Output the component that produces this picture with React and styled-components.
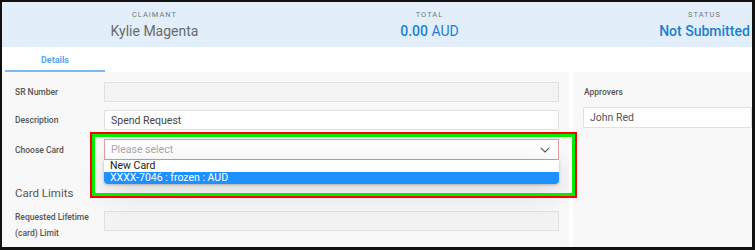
import React from "react";
import styled, { createGlobalStyle } from "styled-components";

const GlobalStyle = createGlobalStyle`
    body {
        margin: 0;
        background: #ffffff;
        font-family: Roboto, "Liberation Sans", sans-serif;
    }
`;

const Frame = styled.div`
    position: relative;
    width: 755px;
    height: 250px;
    box-sizing: border-box;
    border-style: solid;
    border-color: #111;
    border-width: 2px 3px 3px 2px;
    overflow: hidden;
    background: #ffffff;
`;

const Header = styled.div`
    display: grid;
    grid-template-columns: repeat(3, 275px);
    height: 45px;
    padding-left: 15px;
    background-color: #e2effb;
`;

const Stat = styled.div`
    display: flex;
    flex-direction: column;
    align-items: center;
    padding-top: 8px;
`;

const StatLabel = styled.div`
    font-size: 7.5px;
    letter-spacing: 1px;
    line-height: 9px;
    color: #777;
    text-transform: uppercase;
`;

const StatValue = styled.div`
    margin-top: 4px;
    font-size: 14px;
    line-height: 17px;
    font-weight: ${(props) => (props.$bold ? 500 : 400)};
    color: ${(props) => (props.$blue ? "#1b7fd6" : "#6a6a6a")};
    white-space: nowrap;
    & b {
        font-weight: 500;
    }
`;

const Tabs = styled.div`
    display: flex;
    height: 25px;
    background: #ffffff;
    padding-left: 3px;
`;

const Tab = styled.div`
    width: 100px;
    display: flex;
    align-items: center;
    justify-content: center;
    box-sizing: border-box;
    padding-top: 2px;
    font-size: 9px;
    font-weight: 700;
    color: #5ca6ec;
    border-bottom: 2px solid ${(props) => (props.$active ? "#7cb9f0" : "transparent")};
`;

const Body = styled.div`
    display: flex;
    height: 175px;
    background-color: #f8f8f8;
`;

const LeftPanel = styled.div`
    width: 567px;
    box-sizing: border-box;
    padding: 10px 10px 0 13px;
    display: flex;
    flex-direction: column;
`;

const RightPanel = styled.div`
    flex: 1;
    border-left: 4px solid #ffffff;
    padding: 14px 0 0 10px;
`;

const Row = styled.div`
    display: flex;
    align-items: ${(props) => (props.$top ? "flex-start" : "center")};
    margin-top: ${(props) => props.$gap || 0}px;
`;

const Label = styled.div`
    width: 81px;
    padding-right: 8px;
    flex-shrink: 0;
    font-size: 8.5px;
    font-weight: 500;
    line-height: ${(props) => (props.$tall ? "15.5px" : "12px")};
    margin-top: ${(props) => (props.$tall ? "-1px" : "0")};
    color: #555;
`;

const SideLabel = styled.div`
    font-size: 8.5px;
    font-weight: 500;
    line-height: 12px;
    color: #555;
    padding-left: 1px;
    margin-bottom: 9px;
`;

const Input = styled.div`
    flex: 1;
    height: 20px;
    box-sizing: border-box;
    padding: 0 6px;
    display: flex;
    align-items: center;
    font-size: 10.5px;
    color: #444;
    background-color: ${(props) => (props.$disabled ? "#f3f3f3" : "#ffffff")};
    border: 1px solid #e0e0e0;
    border-radius: 1px;
`;

const SideInput = styled(Input)`
    height: 21px;
    color: #555;
`;

const SelectWrap = styled.div`
    position: relative;
    flex: 1;
`;

const Select = styled.div`
    height: 21px;
    box-sizing: border-box;
    padding: 0 8px 0 6px;
    display: flex;
    align-items: center;
    justify-content: space-between;
    font-size: 10.5px;
    color: #a9a9a9;
    background: #ffffff;
    border: 1px solid #e39b9b;
`;

const Options = styled.div`
    position: absolute;
    top: 100%;
    left: 0;
    right: 0;
    background: #ffffff;
    border-radius: 0 0 4px 4px;
    overflow: hidden;
    box-shadow: 0 1px 3px rgba(0, 0, 0, 0.25), 0 8px 30px rgba(0, 0, 0, 0.14);
    z-index: 2;
`;

const Option = styled.div`
    height: 12px;
    line-height: 12px;
    padding-left: 6px;
    font-size: 10.5px;
    color: ${(props) => (props.$selected ? "#ffffff" : "#222")};
    background-color: ${(props) => (props.$selected ? "#1e90ff" : "transparent")};
`;

const Section = styled.div`
    margin-top: 25px;
    font-size: 11.5px;
    line-height: 16px;
    color: #555;
`;

const Highlight = styled.div`
    position: absolute;
    left: 88px;
    top: 130px;
    width: 487px;
    height: 66px;
    box-sizing: border-box;
    border: 2px solid #ff0000;
    box-shadow: inset 0 0 0 3px #00ee00;
    pointer-events: none;
    z-index: 3;
`;

const Chevron = () => (
    <svg width="10" height="6" viewBox="0 0 10 6" fill="none">
        <path d="M0.8 0.8 L5 5 L9.2 0.8" stroke="#555" strokeWidth="1.1" />
    </svg>
);

const App = () => {
    return (
        <>
            <GlobalStyle />
            <Frame>
                <Header>
                    <Stat>
                        <StatLabel>Claimant</StatLabel>
                        <StatValue>Kylie Magenta</StatValue>
                    </Stat>
                    <Stat>
                        <StatLabel>Total</StatLabel>
                        <StatValue $blue>
                            <b>0.00</b> AUD
                        </StatValue>
                    </Stat>
                    <Stat>
                        <StatLabel>Status</StatLabel>
                        <StatValue $blue $bold>Not Submitted</StatValue>
                    </Stat>
                </Header>
                <Tabs>
                    <Tab $active>Details</Tab>
                </Tabs>
                <Body>
                    <LeftPanel>
                        <Row>
                            <Label>SR Number</Label>
                            <Input $disabled />
                        </Row>
                        <Row $gap={8}>
                            <Label>Description</Label>
                            <Input>Spend Request</Input>
                        </Row>
                        <Row $gap={9}>
                            <Label>Choose Card</Label>
                            <SelectWrap>
                                <Select>
                                    Please select
                                    <Chevron />
                                </Select>
                                <Options>
                                    <Option>New Card</Option>
                                    <Option $selected>XXXX-7046 : frozen : AUD</Option>
                                </Options>
                            </SelectWrap>
                        </Row>
                        <Section>Card Limits</Section>
                        <Row $top $gap={10}>
                            <Label $tall>Requested Lifetime (card) Limit</Label>
                            <Input $disabled />
                        </Row>
                    </LeftPanel>
                    <RightPanel>
                        <SideLabel>Approvers</SideLabel>
                        <SideInput>John Red</SideInput>
                    </RightPanel>
                </Body>
                <Highlight />
            </Frame>
        </>
    );
};

export default App;
